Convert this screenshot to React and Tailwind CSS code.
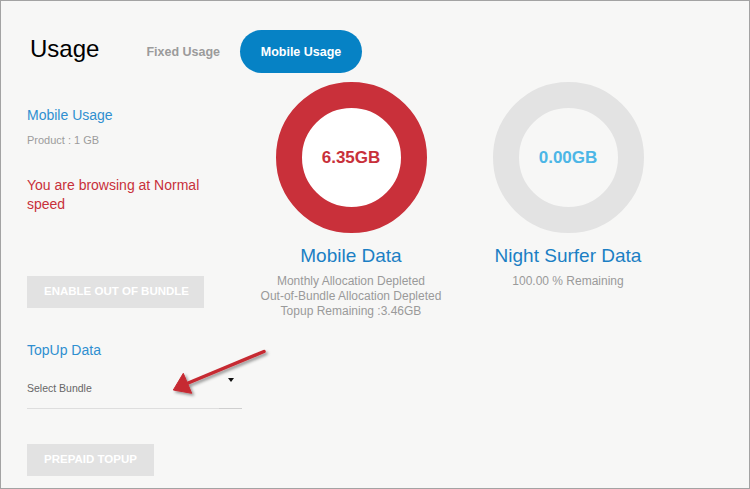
import React from 'react';

const Donut = ({ value, ring, textColor }) => (
  <div className={`w-[151px] h-[151px] rounded-full border-[26px] ${ring} flex items-center justify-center`}>
    <span className={`text-[17px] font-bold ${textColor}`}>{value}</span>
  </div>
);

const UsageCol = ({ value, ring, textColor, title, lines }) => (
  <div className="w-[200px] flex flex-col items-center">
    <div className="mt-[9px]">
      <Donut value={value} ring={ring} textColor={textColor} />
    </div>
    <div className="mt-[12px] text-[19px] leading-[22px] text-[#1b7fc4]">{title}</div>
    <div className="mt-[7px] text-[12px] leading-[15px] text-[#9a9a9a] text-center whitespace-nowrap">
      {lines.map((l) => (
        <div key={l}>{l}</div>
      ))}
    </div>
  </div>
);

const App = () => {
  return (
    <div
      className="relative w-[750px] h-[489px] border border-[#a3a3a3] bg-[#f7f7f6] overflow-hidden"
      style={{ fontFamily: '"Liberation Sans", Arial, sans-serif' }}
    >
      {/* header */}
      <div className="flex items-center pt-[29px] pl-[29px] h-[72px]">
        <span className="text-[24px] leading-none text-black mb-[5px]">Usage</span>
        <button className="ml-[27px] h-[43px] pl-5 pr-5 text-[12.5px] font-bold text-[#9b9b9b] pt-[2px]">Fixed Usage</button>
        <button className="h-[43px] w-[122px] rounded-full bg-[#0682c5] text-[12.5px] font-bold text-white pt-[2px]">
          Mobile Usage
        </button>
      </div>

      <div className="flex">
        {/* left column */}
        <div className="w-[250px] pl-[26px] flex flex-col items-start">
          <div className="mt-[34px] text-[14px] leading-4 text-[#2f8fd0]">Mobile Usage</div>
          <div className="mt-[10px] text-[11px] leading-[14px] text-[#9c9c9c]">Product : 1 GB</div>
          <div className="mt-[29px] w-[200px] text-[14px] leading-[19px] text-[#c8303a]">
            You are browsing at Normal speed
          </div>
          <button className="mt-[62px] w-[177px] h-[32px] bg-[#e2e2e2] text-white text-[11.5px] font-bold text-left pl-[17px]">
            ENABLE OUT OF BUNDLE
          </button>
          <div className="mt-[34px] text-[14px] leading-4 text-[#2f8fd0]">TopUp Data</div>
          <div className="relative mt-[16px] w-[215px] h-[35px] border-b border-[#dedede] pt-[7px]">
            <span className="block text-[10.5px] leading-[14px] text-[#666]">Select Bundle</span>
            <svg className="absolute left-[201px] top-[4px]" width="6" height="4" viewBox="0 0 6 4">
              <polygon points="0,0 6,0 3,4" fill="#111" />
            </svg>
            <div className="absolute right-0 -bottom-px w-[23px] h-px bg-[#cfcfcf]" />
          </div>
          <button className="mt-[35px] w-[127px] h-[32px] bg-[#e2e2e2] text-white text-[11.5px] font-bold text-left pl-[17px]">
            PREPAID TOPUP
          </button>
        </div>

        {/* charts */}
        <div className="flex gap-[17px]">
          <UsageCol
            value="6.35GB"
            ring="border-[#c9303a] bg-white"
            textColor="text-[#c8303a]"
            title="Mobile Data"
            lines={['Monthly Allocation Depleted', 'Out-of-Bundle Allocation Depleted', 'Topup Remaining :3.46GB']}
          />
          <UsageCol
            value="0.00GB"
            ring="border-[#e3e3e3] bg-[#f7f7f6]"
            textColor="text-[#4cb6e6]"
            title="Night Surfer Data"
            lines={['100.00 % Remaining']}
          />
        </div>
      </div>

      {/* annotation arrow */}
      <svg className="absolute left-[159px] top-[339px]" width="115" height="65" viewBox="0 0 115 65">
        <defs>
          <filter id="sh" x="-20%" y="-20%" width="150%" height="160%">
            <feDropShadow dx="2" dy="2" stdDeviation="1.4" floodColor="#000" floodOpacity="0.4" />
          </filter>
        </defs>
        <g filter="url(#sh)" fill="#c62a32" stroke="#c62a32">
          <line x1="104" y1="11.5" x2="27" y2="43.5" strokeWidth="3.5" strokeLinecap="round" />
          <polygon points="13.3,50 23.3,33.3 31.7,53.3" strokeWidth="1" strokeLinejoin="round" />
        </g>
      </svg>
    </div>
  );
};

export default App;
